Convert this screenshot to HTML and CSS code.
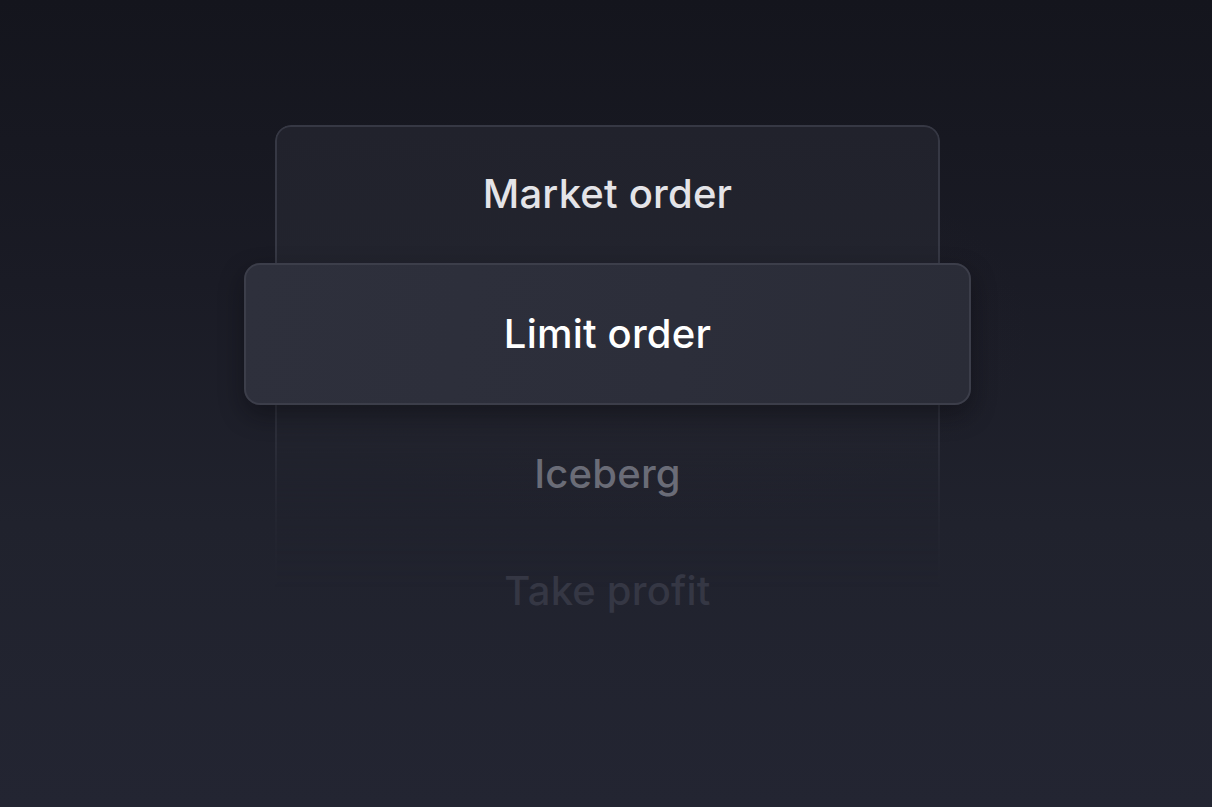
FILE: index.html
```
<!DOCTYPE html>
<html lang="en">
<head>
<meta charset="utf-8">
<title>Order type picker</title>
<link rel="stylesheet" href="styles.css">
</head>
<body>
<main class="stage">
  <div class="picker">
    <div class="row row-market">Market order</div>
    <div class="row row-selected">Limit order</div>
    <div class="row row-iceberg">Iceberg</div>
    <div class="row row-take">Take profit</div>
  </div>
</main>
</body>
</html>
```

FILE: styles.css
```
html, body {
  margin: 0;
  height: 100%;
}
body {
  background:
    radial-gradient(ellipse 560px 280px at 640px 330px, rgba(64, 48, 58, 0.16), rgba(0,0,0,0) 70%),
    linear-gradient(180deg, #14151d 0%, #1a1b25 35%, #20222d 65%, #232532 100%);
  font-family: Inter, "Noto Sans", sans-serif;
  overflow: hidden;
}
.stage {
  display: flex;
  justify-content: center;
  padding-top: 125px;
  padding-left: 3px;
}
.picker {
  position: relative;
  width: 665px;
  display: flex;
  flex-direction: column;
}
.picker::before {
  content: "";
  position: absolute;
  inset: 0;
  border: 2px solid #363844;
  border-bottom: none;
  border-radius: 16px 16px 0 0;
  background: linear-gradient(180deg, #21222c 0%, #23252f 50%, #22242f 100%);
  -webkit-mask-image: linear-gradient(180deg, #000 0%, #000 45%, rgba(0,0,0,0.55) 62%, rgba(0,0,0,0.2) 75%, rgba(0,0,0,0) 90%);
  mask-image: linear-gradient(180deg, #000 0%, #000 45%, rgba(0,0,0,0.55) 62%, rgba(0,0,0,0.2) 75%, rgba(0,0,0,0) 90%);
  z-index: 0;
}
.row {
  position: relative;
  z-index: 1;
  display: flex;
  align-items: center;
  justify-content: center;
  font-size: 40px;
  font-weight: 500;
  letter-spacing: 0.2px;
  line-height: 1;
}
.row-market {
  height: 138px;
  color: #e4e4e8;
}
.row-selected {
  height: 138px;
  margin: 0 -31px;
  border: 2px solid #3c3e4a;
  border-radius: 16px;
  background: linear-gradient(100deg, #2e303c 0%, #2c2e3a 60%, #2a2c37 100%);
  box-shadow: 0 10px 24px rgba(8, 8, 14, 0.45);
  color: #ffffff;
  z-index: 2;
}
.row-iceberg {
  height: 138px;
  color: #6a6c77;
}
.row-take {
  height: 96px;
  color: #353744;
}
```
